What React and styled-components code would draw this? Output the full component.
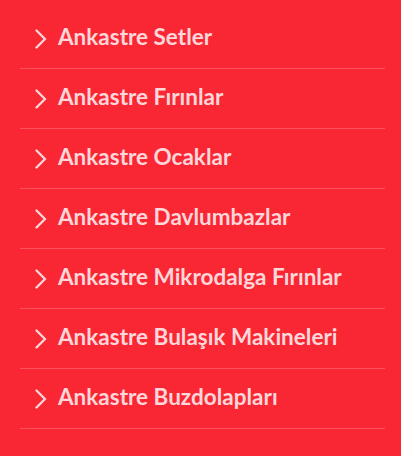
import styled, { createGlobalStyle } from "styled-components";

const ITEMS = [
  "Ankastre Setler",
  "Ankastre Fırınlar",
  "Ankastre Ocaklar",
  "Ankastre Davlumbazlar",
  "Ankastre Mikrodalga Fırınlar",
  "Ankastre Bulaşık Makineleri",
  "Ankastre Buzdolapları",
];

const GlobalStyle = createGlobalStyle`
  html, body {
    margin: 0;
    padding: 0;
    background: #f92733;
  }
`;

const Panel = styled.div`
  width: 401px;
  height: 456px;
  background: #f92733;
  padding: 9px 16px 0 20px;
  box-sizing: border-box;
`;

const List = styled.ul`
  list-style: none;
  margin: 0;
  padding: 0;
`;

const Row = styled.li`
  height: 60px;
  display: flex;
  align-items: center;
  gap: 10px;
  padding-left: 14px;
  border-bottom: 1px solid rgba(255, 255, 255, 0.2);
  box-sizing: border-box;
`;

const Label = styled.span`
  font-family: Lato, "Open Sans", sans-serif;
  font-weight: 700;
  font-size: 22.5px;
  line-height: 1.2;
  padding-bottom: 4px;
  color: #ffd6da;
`;

function Chevron() {
  return (
    <svg width="14" height="20" viewBox="0 0 14 20" fill="none">
      <path
        d="M2.5 1.5 L11 10 L2.5 18.5"
        stroke="#ffd6da"
        strokeWidth="2.3"
        strokeLinecap="round"
        strokeLinejoin="round"
      />
    </svg>
  );
}

export default function App() {
  return (
    <>
      <GlobalStyle />
      <Panel>
        <List>
          {ITEMS.map((name) => (
            <Row key={name}>
              <Chevron />
              <Label>{name}</Label>
            </Row>
          ))}
        </List>
      </Panel>
    </>
  );
}
